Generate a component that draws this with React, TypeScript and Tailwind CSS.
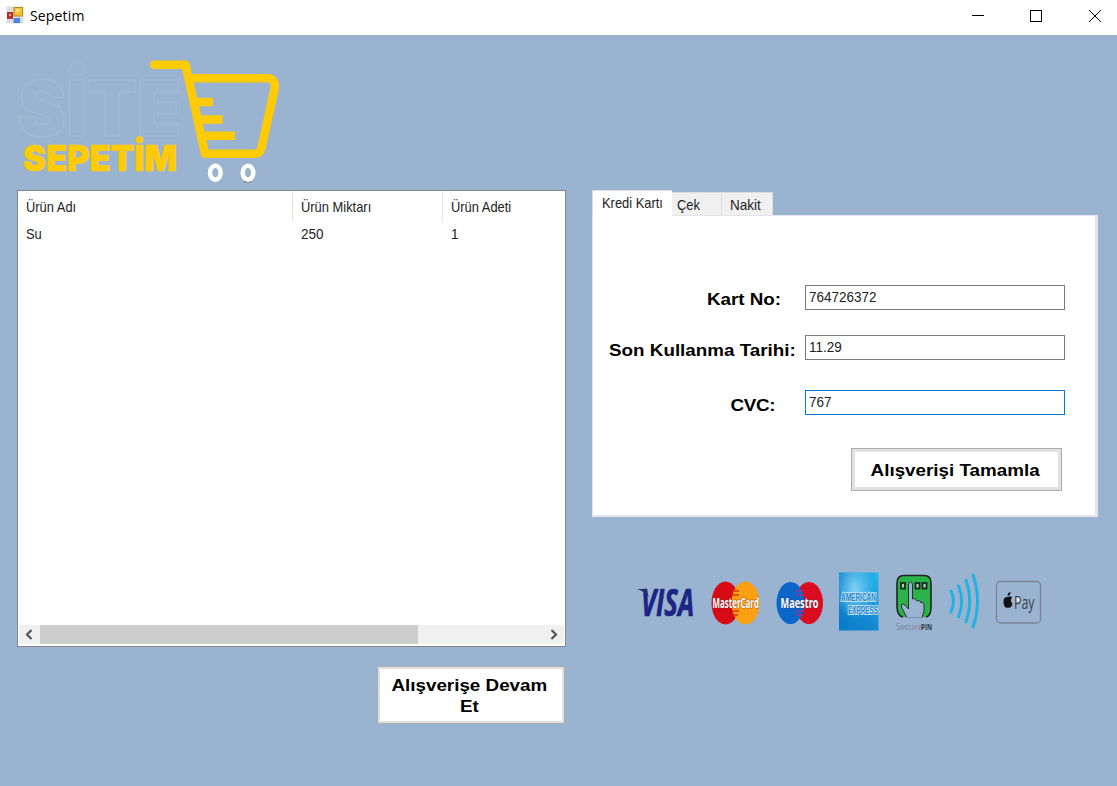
import React from "react";

const UI = "font-['Liberation_Sans',sans-serif] text-[15px] leading-[20px] text-[#222] whitespace-pre";
const BOLD = "font-['Liberation_Sans',sans-serif] font-bold text-[16.5px] leading-[21px] text-black whitespace-pre";
const NARROW = "inline-block origin-left scale-x-[0.86]";
const DIGITS = "inline-block origin-left scale-x-[0.9]";
const WIDE = "inline-block scale-x-[1.14]";

function TitleBar() {
  return (
    <header className="flex h-[35px] shrink-0 items-center bg-white">
      <svg className="-mt-[5px] ml-[6px] h-[18px] w-[18px]" viewBox="0 0 18 18">
        <rect x="0.5" y="0.5" width="17" height="17" fill="#dcdcdc" />
        <rect x="1" y="6" width="6" height="7" fill="#b8322c" />
        <rect x="3" y="8" width="2" height="2" fill="#f0a090" />
        <rect x="8" y="1.500" width="8.500" height="8.500" fill="#f5c030" stroke="#b88a18" />
        <rect x="9.500" y="3" width="4" height="3" fill="#ffe07a" />
        <rect x="7.500" y="12" width="6.500" height="5" fill="#4f86dc" />
      </svg>
      <span className="-mt-[4px] ml-[6px] font-['Open_Sans',sans-serif] text-[14px] tracking-[0.15px] text-black">Sepetim</span>
      <svg className="ml-auto h-[35px] w-[167px]" viewBox="950 0 167 35" fill="none" stroke="#000" shapeRendering="crispEdges">
        <path d="M972 15.500H984" />
        <rect x="1030.500" y="10.500" width="11" height="11" />
        <path d="M1089 10L1101 22M1101 10L1089 22" shapeRendering="auto" />
      </svg>
    </header>
  );
}

function Logo() {
  return (
    <svg className="block h-[155px] w-[290px]" viewBox="17 35 290 155" fontFamily="Inter, Liberation Sans, sans-serif" fontWeight="900">
      <text x="18" y="136" fontSize="77" textLength="163" lengthAdjust="spacingAndGlyphs" fill="none" stroke="#a5bcd7" strokeWidth="1">SİTE</text>
      <text x="23" y="171" fontSize="36" textLength="154" lengthAdjust="spacingAndGlyphs" fill="#ffcb05" stroke="#ffcb05" strokeWidth="0.600">SEPETİM</text>
      <g fill="none" stroke="#ffcb05" strokeWidth="8.500" strokeLinejoin="round">
        <path d="M154 64.700H185.500L205 153.700H255Q260 153.700 261.500 148L274.500 89Q276 78.300 267 78.300H190" strokeLinecap="round" />
        <path d="M195 102H213M198 119.500H222.500M202 135.700H235" />
      </g>
      <path d="M244 165H251M244 181.500H251" stroke="#777" strokeWidth="2" />
      <g fill="none" stroke="#fff" strokeWidth="4.500">
        <ellipse cx="215.300" cy="172.700" rx="5.300" ry="7" />
        <ellipse cx="248" cy="172.700" rx="5.300" ry="7" />
      </g>
    </svg>
  );
}

function ProductList() {
  return (
    <section className="flex h-[457px] w-[549px] flex-col border border-[#828790] bg-white">
      <div className={`${UI} grid h-[31px] grid-cols-[275px_150px_122px]`}>
        <div className="border-r border-[#e5e5e5] pl-[8px] pt-[6px]"><span className={NARROW}>Ürün Adı</span></div>
        <div className="border-r border-[#e5e5e5] pl-[8px] pt-[6px]"><span className={NARROW}>Ürün Miktarı</span></div>
        <div className="pl-[8px] pt-[6px]"><span className={NARROW}>Ürün Adeti</span></div>
      </div>
      <div className={`${UI} grid grid-cols-[275px_150px_122px] pt-[2px]`}>
        <div className="pl-[8px]"><span className={NARROW}>Su</span></div>
        <div className="pl-[8px]"><span className={DIGITS}>250</span></div>
        <div className="pl-[8px]"><span className={DIGITS}>1</span></div>
      </div>
      <div className="mx-[1px] mb-[2px] mt-auto flex h-[19px] items-center bg-[#f0f0f0]">
        <svg className="h-[19px] w-[21px]" viewBox="0 0 21 19" fill="none" stroke="#555" strokeWidth="2.200"><path d="M12.500 5L8 9.500L12.500 14" /></svg>
        <div className="h-[19px] w-[378px] bg-[#cdcdcd]" />
        <svg className="ml-auto h-[19px] w-[21px]" viewBox="0 0 21 19" fill="none" stroke="#555" strokeWidth="2.200"><path d="M8.500 5L13 9.500L8.500 14" /></svg>
      </div>
    </section>
  );
}

function Field({ label, value, pad, row, border }: { label: string; value: string; pad: string; row: string; border: string }) {
  return (
    <label className={`flex ${row}`}>
      <span className={`${BOLD} ${pad} w-[212px] shrink-0 text-right`}>
        <span className="inline-block origin-right scale-x-[1.14]">{label}</span>
      </span>
      <span className={`${UI} h-[25px] w-[260px] border ${border} bg-white pl-[3px] pt-[1px]`}>
        <span className={DIGITS}>{value}</span>
      </span>
    </label>
  );
}

function PaymentTabs() {
  return (
    <section className="flex w-[506px] flex-col">
      <nav className={`${UI} flex h-[25px] items-end`}>
        <div className="relative -mb-[1px] h-[26px] w-[80px] border-l border-t border-[#dcdcdc] bg-white pl-[9px] pt-[2px]"><span className={NARROW}>Kredi Kartı</span></div>
        <div className="h-[23px] w-[50px] border-r border-t border-[#dcdcdc] bg-[#f0f0f0] pl-[5px] pt-[2px]"><span className={NARROW}>Çek</span></div>
        <div className="h-[23px] w-[51px] border-r border-t border-[#dcdcdc] bg-[#f0f0f0] pl-[8px] pt-[2px]"><span className={DIGITS}>Nakit</span></div>
      </nav>
      <div className="h-[302px] border-b-2 border-l border-r-[3px] border-t border-[#e3e5e8] bg-white pt-[69px]">
        <Field label="Kart No:" value="764726372" pad="pr-[24px] pt-[4px]" row="h-[50px]" border="border-[#7a7a7a]" />
        <Field label="Son Kullanma Tarihi:" value="11.29" pad="pr-[9px] pt-[5px]" row="h-[55px]" border="border-[#7a7a7a]" />
        <Field label="CVC:" value="767" pad="pr-[30px] pt-[5px] tracking-[-0.3px]" row="h-[58px]" border="border-[#0078d7]" />
        <button className={`${BOLD} ml-[258px] flex h-[43px] w-[211px] items-center justify-center border border-[#adadad] bg-white pr-[2px] pt-[1px] shadow-[inset_0_0_0_3px_#e1e1e1]`}>
          <span className={WIDE}>Alışverişi Tamamla</span>
        </button>
      </div>
    </section>
  );
}

function PaymentLogos() {
  return (
    <svg className="ml-[38px] mt-[43px] block h-[80px] w-[420px]" viewBox="630 560 420 80" fontFamily="Open Sans, sans-serif" fontWeight="bold">
      <defs>
        <linearGradient id="amex" x1="0" y1="1" x2="1" y2="0">
          <stop offset="0" stopColor="#087bc7" />
          <stop offset="0.500" stopColor="#1689d2" />
          <stop offset="1" stopColor="#24b8ee" />
        </linearGradient>
        <radialGradient id="shine" cx="0.400" cy="0.300" r="0.500">
          <stop offset="0" stopColor="#8edcf8" stopOpacity="0.900" />
          <stop offset="1" stopColor="#8edcf8" stopOpacity="0" />
        </radialGradient>
      </defs>
      <text x="641" y="616" fontSize="37" fontStyle="italic" textLength="53" lengthAdjust="spacingAndGlyphs" fill="#1b2583" stroke="#1b2583" strokeWidth="0.700">VISA</text>
      <path d="M637 589H646L649 597Q644 591 637 589Z" fill="#25305f" />

      <ellipse cx="725.500" cy="603" rx="14" ry="21.500" fill="#d60b16" />
      <ellipse cx="745.500" cy="603" rx="14" ry="21.500" fill="#fb9f13" />
      <path d="M732 591H739M732 595H739M732 611H739M733 615H738" stroke="#d9341a" strokeWidth="1.500" />
      <text x="712.500" y="608" fontSize="14.500" textLength="46.500" lengthAdjust="spacingAndGlyphs" fill="#fff" stroke="#6b202099" strokeWidth="1.200" paintOrder="stroke">MasterCard</text>

      <ellipse cx="809" cy="603" rx="14" ry="21" fill="#d90c20" />
      <ellipse cx="790.500" cy="603" rx="14" ry="21" fill="#0b66c9" />
      <path d="M796 591H803M796 595H804M796 611H804M796 615H803" stroke="#7d3c9c" strokeWidth="2" />
      <text x="780.500" y="608" fontSize="14.500" textLength="38" lengthAdjust="spacingAndGlyphs" fill="#fff" stroke="#34306499" strokeWidth="1.200" paintOrder="stroke">Maestro</text>

      <rect x="839" y="572.500" width="39.500" height="58" fill="url(#amex)" />
      <rect x="839" y="572.500" width="39.500" height="58" fill="url(#shine)" />
      <g fontSize="10" fill="#2386cb" stroke="#c3e3f5" strokeWidth="2.200" paintOrder="stroke" fontFamily="Liberation Sans, sans-serif">
        <text x="841" y="601" textLength="35" lengthAdjust="spacingAndGlyphs">AMERICAN</text>
        <text x="848" y="613.500" textLength="30" lengthAdjust="spacingAndGlyphs">EXPRESS</text>
      </g>

      <path d="M903 617Q897 616 897 606V583Q897 575.500 904 575.500H924Q931 575.500 931 583V607Q931 616 926 617" fill="#2bb34b" stroke="#222" strokeWidth="1.600" />
      <g fill="#b3c9b9" stroke="#162a1b" strokeWidth="1.800">
        <rect x="901" y="583" width="4" height="5.500" />
        <rect x="915.500" y="583" width="4" height="5.500" />
        <rect x="922.500" y="583" width="4" height="5.500" />
      </g>
      <path d="M907 618L901.500 607Q901 602 905 605L908.500 609V584Q910.500 580 912.500 584V599Q915 597 917 601Q920 599 921 603Q924 601 924 605V611L922 618Z" fill="#9ab3d0" stroke="#26332c" strokeWidth="1" />
      <path d="M903 618.500H926" stroke="#99b3d1" strokeWidth="2" />
      <text x="896" y="630" fontSize="8.500" textLength="26" lengthAdjust="spacingAndGlyphs" fontWeight="normal" fill="#748095">Secure</text>
      <text x="921" y="630" fontSize="8.500" textLength="11" lengthAdjust="spacingAndGlyphs" fill="#303642">PIN</text>

      <g fill="none" stroke="#1fb3e2" strokeWidth="3" strokeLinecap="round">
        <path d="M951 591Q956 601 951 612" />
        <path d="M958.500 586Q965 601 958.500 617" />
        <path d="M966 580Q973.500 601 966 622" />
        <path d="M973 575Q982 601 973 627" />
      </g>

      <rect x="996.500" y="581.500" width="44" height="41.500" rx="4" fill="none" stroke="#7a8594" strokeWidth="1.300" />
      <path d="M1008 597Q1010.500 595.500 1012 597.500Q1009.500 601 1012.500 603.500Q1011 609 1008 607.500Q1004.500 609 1003.500 603Q1003 596 1008 597ZM1007.500 596Q1007.500 592.500 1010.500 592Q1010.500 595.500 1007.500 596Z" fill="#111" />
      <path d="M1016.500 596.500H1020V601.500H1016.500Z" fill="#f4f6f8" />
      <text x="1014" y="608.500" fontSize="18.500" fontWeight="normal" textLength="20.500" lengthAdjust="spacingAndGlyphs" fill="#3b424c">Pay</text>
    </svg>
  );
}

export default function App() {
  return (
    <div className="flex h-[786px] w-[1117px] flex-col overflow-hidden bg-[#99b3d1]">
      <TitleBar />
      <main className="flex flex-1">
        <div className="ml-[17px] flex w-[549px] flex-col">
          <Logo />
          <ProductList />
          <button className={`${BOLD} mr-[1px] mt-[19px] h-[58px] w-[188px] self-end border border-[#adadad] bg-white pr-[3px] pt-[1px] text-center shadow-[inset_0_0_0_2px_#e1e1e1]`}>
            <span className={WIDE}>Alışverişe Devam<br />Et</span>
          </button>
        </div>
        <div className="ml-[26px] flex flex-col pt-[155px]">
          <PaymentTabs />
          <PaymentLogos />
        </div>
      </main>
    </div>
  );
}
